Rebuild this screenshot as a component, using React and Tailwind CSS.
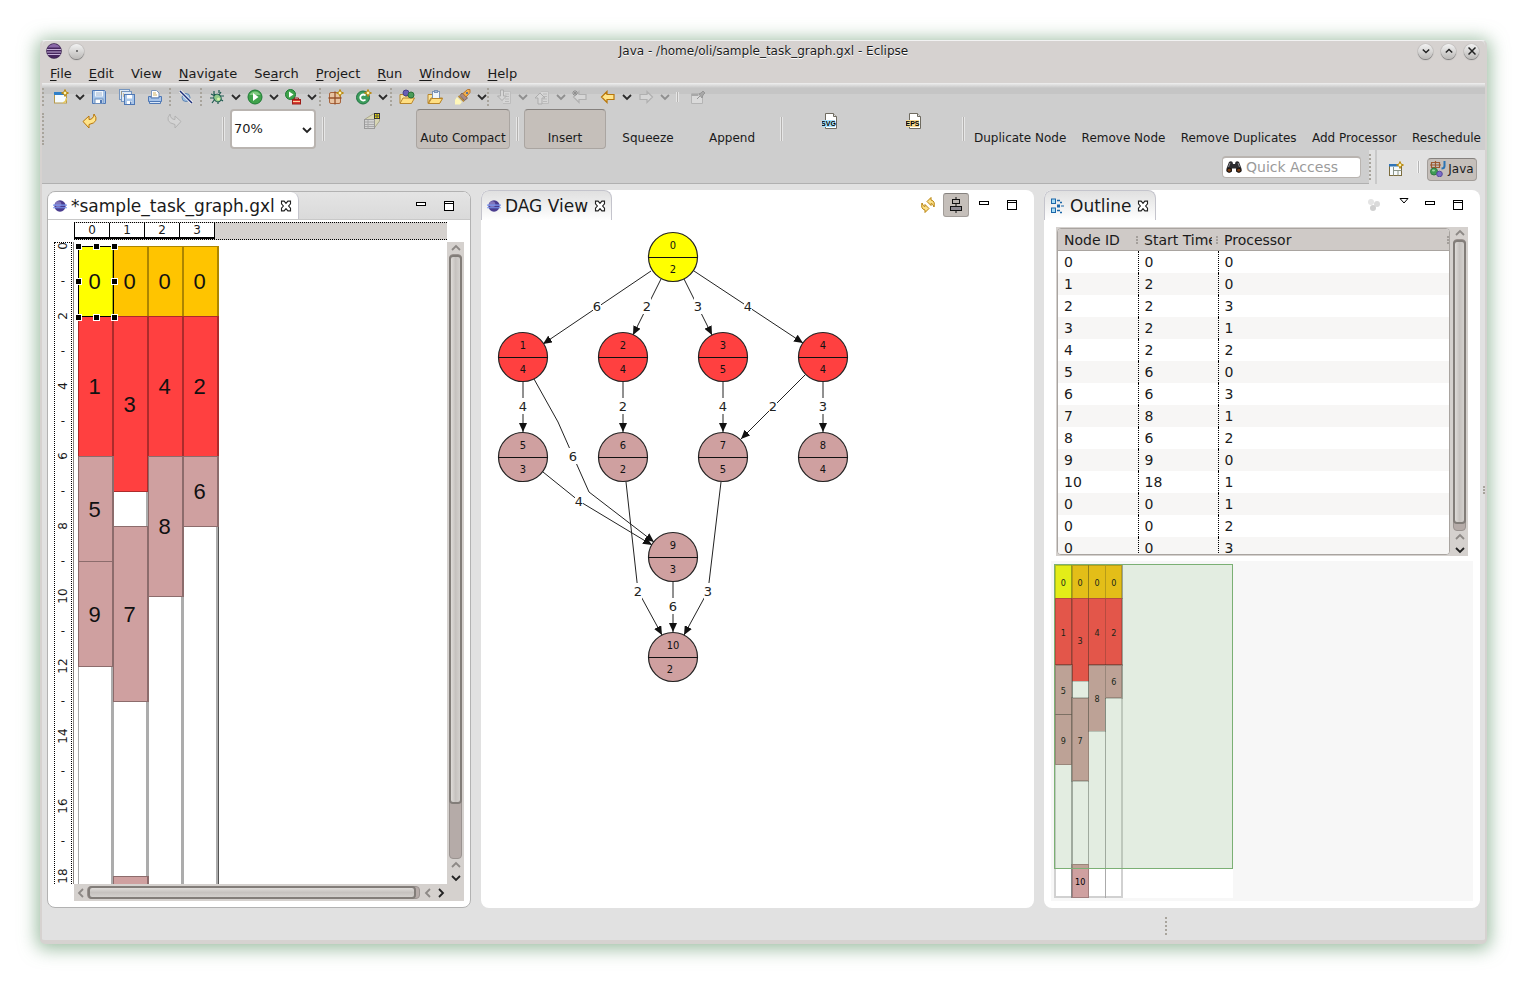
import React, { useState } from 'react';

const MENUS = [
  ['', 'F', 'ile'],
  ['', 'E', 'dit'],
  ['View', '', ''],
  ['', 'N', 'avigate'],
  ['Se', 'a', 'rch'],
  ['', 'P', 'roject'],
  ['', 'R', 'un'],
  ['', 'W', 'indow'],
  ['', 'H', 'elp'],
];

const YELLOW = '#ffff00';
const ORANGE = '#ffc400';
const RED = '#ff4040';
const PINK = '#cfa0a0';

// lane = processor, start / end in time units
const TASKS = [
  { id: 0, lane: 0, start: 0, end: 2, color: YELLOW },
  { id: 0, lane: 1, start: 0, end: 2, color: ORANGE },
  { id: 0, lane: 2, start: 0, end: 2, color: ORANGE },
  { id: 0, lane: 3, start: 0, end: 2, color: ORANGE },
  { id: 1, lane: 0, start: 2, end: 6, color: RED },
  { id: 3, lane: 1, start: 2, end: 7, color: RED },
  { id: 4, lane: 2, start: 2, end: 6, color: RED },
  { id: 2, lane: 3, start: 2, end: 6, color: RED },
  { id: 5, lane: 0, start: 6, end: 9, color: PINK },
  { id: 9, lane: 0, start: 9, end: 12, color: PINK },
  { id: 7, lane: 1, start: 8, end: 13, color: PINK },
  { id: 8, lane: 2, start: 6, end: 10, color: PINK },
  { id: 6, lane: 3, start: 6, end: 8, color: PINK },
  { id: 10, lane: 1, start: 18, end: 20, color: PINK },
];

const ROWS = [
  [0, 0, 0], [1, 2, 0], [2, 2, 3], [3, 2, 1], [4, 2, 2], [5, 6, 0], [6, 6, 3],
  [7, 8, 1], [8, 6, 2], [9, 9, 0], [10, 18, 1], [0, 0, 1], [0, 0, 2], [0, 0, 3],
];

const NODES = [
  { id: 0, cost: 2, x: 192, y: 37, color: YELLOW },
  { id: 1, cost: 4, x: 42, y: 137, color: RED },
  { id: 2, cost: 4, x: 142, y: 137, color: RED },
  { id: 3, cost: 5, x: 242, y: 137, color: RED },
  { id: 4, cost: 4, x: 342, y: 137, color: RED },
  { id: 5, cost: 3, x: 42, y: 237, color: PINK },
  { id: 6, cost: 2, x: 142, y: 237, color: PINK },
  { id: 7, cost: 5, x: 242, y: 237, color: PINK },
  { id: 8, cost: 4, x: 342, y: 237, color: PINK },
  { id: 9, cost: 3, x: 192, y: 337, color: PINK },
  { id: 10, cost: 2, x: 192, y: 437, color: PINK },
];

const EDGES = [
  { points: '170,51 62,124', label: 6, x: 116, y: 86 },
  { points: '180,59 152,115', label: 2, x: 166, y: 86 },
  { points: '203,59 231,115', label: 3, x: 217, y: 86 },
  { points: '213,51 322,123', label: 4, x: 267, y: 86 },
  { points: '42,162 42,212', label: 4, x: 42, y: 186 },
  { points: '142,162 142,212', label: 2, x: 142, y: 186 },
  { points: '242,162 242,212', label: 4, x: 242, y: 186 },
  { points: '342,162 342,212', label: 3, x: 342, y: 186 },
  { points: '324,155 260,219', label: 2, x: 292, y: 186 },
  { points: '53,159 77,202 92,236 108,272 173,322', label: 6, x: 92, y: 236 },
  { points: '62,252 98,281 171,325', label: 4, x: 98, y: 281 },
  { points: '145,262 157,371 181,415', label: 2, x: 157, y: 371 },
  { points: '240,262 227,371 203,415', label: 3, x: 227, y: 371 },
  { points: '192,362 192,412', label: 6, x: 192, y: 386 },
];

/* ---------- icons ---------- */

const Svg = ({ size = 16, children, className = '' }) => (
  <svg width={size} height={size} viewBox="0 0 16 16" fill="none" className={`shrink-0 ${className}`} aria-hidden="true">
    {children}
  </svg>
);

const Sparkle = ({ x = 12, y = 4 }) => (
  <path
    d={`M${x} ${y - 3.5}l1 2.5 2.5 1-2.5 1-1 2.5-1-2.5-2.5-1 2.5-1z`}
    fill="#fff6b0"
    stroke="#b8860b"
    strokeWidth="1"
  />
);

const NewIcon = () => (
  <Svg>
    <rect x="1.5" y="3.5" width="12" height="10.5" fill="#f4fbff" stroke="#b89a4a" />
    <rect x="1" y="3" width="10" height="3" fill="#2f7fc8" />
    <path d="M10 14q3-1 3.500-5" stroke="#e6c860" strokeWidth="1.500" />
    <Sparkle />
  </Svg>
);

const SaveIcon = () => (
  <Svg>
    <path d="M1.500 1.500h12l1 1v12h-13z" fill="#a9c6e8" stroke="#4f78b5" />
    <rect x="4" y="2" width="8" height="5.500" fill="#f2f6fb" />
    <path d="M5 4h6M5 6h6" stroke="#9fb6d2" />
    <rect x="4" y="10" width="8" height="4.500" fill="#fff" stroke="#6d8fbe" />
    <rect x="9" y="11" width="2" height="3" fill="#4f78b5" />
  </Svg>
);

const SaveAllIcon = () => (
  <Svg>
    <rect x="0.500" y="0.500" width="10" height="10" fill="#dfe9f5" stroke="#7595bf" />
    <rect x="2.500" y="2.500" width="10" height="10" fill="#dfe9f5" stroke="#7595bf" />
    <rect x="5.500" y="5.500" width="10" height="10" fill="#a9c6e8" stroke="#4f78b5" />
    <rect x="8" y="6" width="5" height="3.500" fill="#fff" />
    <rect x="8" y="12" width="5" height="3" fill="#fff" />
    <rect x="11" y="12.500" width="1.500" height="2.500" fill="#4f78b5" />
    <path d="M2 3h1M2 5h1M4 5h1M4 7h1" stroke="#c09a50" />
  </Svg>
);

const PrintIcon = () => (
  <Svg>
    <path d="M4.500 8V1.500h5l2.500 2.500v4" fill="#fff" stroke="#7b96bd" />
    <path d="M6 4h3M6 6h4" stroke="#d0b060" />
    <path d="M1.500 7.500h2.500v1.500h8V7.500h2.500v5h-13z" fill="#a7c4ea" stroke="#4f78b5" />
    <path d="M2.500 12.500h11v2h-11z" fill="#dbe8f8" stroke="#4f78b5" />
  </Svg>
);

const SkipIcon = () => (
  <Svg>
    <circle cx="8" cy="8.500" r="4" fill="#9fc0e2" stroke="#5f86b4" />
    <path d="M2 2l12 12" stroke="#fff" strokeWidth="3" />
    <path d="M2 2l12 12" stroke="#1c2f7a" strokeWidth="1.500" />
  </Svg>
);

const DebugIcon = () => (
  <Svg>
    <path d="M5 2v3l2 2M10 1v3M2 5l4 2M1 9h5M3 14l3-4M9 15v-3M12 3l-2 3M15 7h-4M14 12l-3-2" stroke="#1d5a50" strokeWidth="1.200" />
    <ellipse cx="8.500" cy="9" rx="3.500" ry="4" transform="rotate(-40 8.500 9)" fill="#8fc98a" stroke="#1d5a50" />
    <circle cx="9.500" cy="10" r="1.500" fill="#d9f3a8" />
  </Svg>
);

const RunIcon = () => (
  <Svg>
    <circle cx="8" cy="8" r="7" fill="#3fa24b" stroke="#1d7a34" />
    <path d="M2.500 6a6 6 0 0 1 11 0z" fill="#7fca80" />
    <path d="M6 4l5.500 4L6 12z" fill="#fff" />
  </Svg>
);

const ExternalIcon = () => (
  <Svg>
    <circle cx="5.500" cy="5.500" r="5" fill="#3fa24b" stroke="#1d7a34" />
    <path d="M4 2.500l4.500 3L4 8.500z" fill="#fff" />
    <path d="M9.500 10.500v-1.500h4v1.500" stroke="#a02020" />
    <rect x="7.500" y="10.500" width="8" height="4.500" fill="#d83a30" stroke="#9c1c18" />
    <path d="M8 12.500h7" stroke="#ffd0a0" />
  </Svg>
);

const PackageIcon = () => (
  <Svg>
    <rect x="1.500" y="3.500" width="11" height="11" rx="1.500" fill="#e8c4a2" stroke="#a8643c" />
    <path d="M7 2.500v13M0.500 9h13" stroke="#96502a" strokeWidth="1.300" />
    <Sparkle />
  </Svg>
);

const ClassIcon = () => (
  <Svg>
    <circle cx="7" cy="8.500" r="6.500" fill="#3c9c5c" stroke="#1f7440" />
    <path d="M9.500 6.500a3 3 0 1 0 0 4" stroke="#fff" strokeWidth="1.800" />
    <Sparkle />
  </Svg>
);

const Folder = () => (
  <>
    <path d="M1 14V5.500h4l1 1.500h6V9" fill="#fbe6a0" stroke="#b8862c" />
    <path d="M1 14.500l3-5.500h11.500l-3 5.500z" fill="#ffdf82" stroke="#b8862c" />
  </>
);

const OpenTypeIcon = () => (
  <Svg>
    <Folder />
    <circle cx="7" cy="4" r="3" fill="#6a5fb4" stroke="#47408a" />
    <circle cx="12" cy="6" r="3" fill="#4a9c58" stroke="#2a7038" />
  </Svg>
);

const OpenTaskIcon = () => (
  <Svg>
    <Folder />
    <rect x="5.500" y="2.500" width="7" height="7" fill="#eef5fc" stroke="#7b93b5" />
    <rect x="7.500" y="1.500" width="3" height="2" fill="#a5b9d4" stroke="#7b93b5" />
    <path d="M1.500 14.500l3-5h11l-3 5z" fill="#ffdf82" stroke="#b8862c" />
  </Svg>
);

const TorchIcon = () => (
  <Svg>
    <path d="M2 8l5 5-2 2.500H0V11z" fill="#fff7b8" />
    <path d="M3.500 7l5.500 5.500" stroke="#b8862c" strokeWidth="1.500" />
    <path d="M5 6.500l2-2.500 5.500 5-3 2.500z" fill="#a98c86" stroke="#7c6460" />
    <path d="M8 4.500l4.500-4h2.500v3L11 8z" fill="#f6b04c" stroke="#b8762c" />
    <circle cx="12" cy="4" r="1" fill="#2f5fa8" />
  </Svg>
);

const AnnotationIcon = ({ up }) => (
  <Svg>
    <path d="M7 2.500h7.500v12H7" fill="#d6d6d6" stroke="#bdbdbd" />
    <path d="M9 5h4M9 7.500h4M9 10h4M9 12.500h4" stroke="#bababa" />
    {up ? (
      <path d="M6 4l5 5H8v6H4V9H1z" fill="#d6d6d6" stroke="#adadad" />
    ) : (
      <path d="M6 11.500l-4.500-4.500H4.500V1h3v6h3z" fill="#d6d6d6" stroke="#adadad" />
    )}
  </Svg>
);

const ArrowIcon = ({ flip, disabled, star }) => (
  <Svg className={flip ? '-scale-x-100' : ''}>
    <path
      d="M1.500 8l5.500-5.500v3h7v5h-7v3z"
      fill={disabled ? '#d6d6d6' : '#ffe48a'}
      stroke={disabled ? '#b0b0b0' : '#b8760a'}
      strokeWidth="1.200"
    />
    {star && <path d="M3 1v6M0 4h6M1 2l4 4M5 2L1 6" stroke="#8f8f8f" />}
  </Svg>
);

const PinIcon = () => (
  <Svg>
    <path d="M1.500 4.500h11v10h-11z" fill="#dadada" stroke="#b4b4b4" />
    <path d="M1.500 6h7" stroke="#a8a8a8" strokeWidth="2" />
    <path d="M7 10l3-3M9 5l3 4 1-3 2-2-2-2-2 2z" fill="#a8a8a8" stroke="#979797" />
  </Svg>
);

const UndoIcon = ({ flip, disabled }) => (
  <Svg className={flip ? '-scale-x-100' : ''}>
    <path
      d="M1 8.500L7 3v3.500q4.500 0 5-5.500 6 8-5 10.500V15z"
      fill={disabled ? '#d4d4d4' : '#ffe48a'}
      stroke={disabled ? '#b2b2b2' : '#b8760a'}
    />
  </Svg>
);

const PropsIcon = () => (
  <Svg>
    <path d="M0.500 6.500L9 1h6.500v7L10 15.500V6.500z" fill="#d8d6b4" stroke="#aaa88c" />
    <rect x="0.500" y="6.500" width="10" height="9" fill="#d4d4d4" stroke="#9a9a9a" />
    <path d="M1 9h9M1 11.500h9M1 13.500h9M4 7v8.500" stroke="#a8a8a8" />
    <rect x="10.500" y="0.500" width="5" height="5" fill="#f0e000" stroke="#333" />
    <path d="M13 1v4.500M11 3h4.500" stroke="#555" />
  </Svg>
);

const FileTypeIcon = ({ label, color }) => (
  <Svg>
    <path d="M3.500 0.500h8l3 3v12h-11z" fill="#fff" stroke="#6f6b60" />
    <path d="M11.500 0.500v3h3" fill="#ddd" stroke="#6f6b60" />
    <rect x="0" y="7" width="13" height="7" fill={color} />
    <text x="6.500" y="13" fontSize="7" fontWeight="bold" textAnchor="middle" fill="#000" fontFamily="Liberation Sans">
      {label}
    </text>
  </Svg>
);

const BinocularsIcon = () => (
  <Svg>
    <path d="M3 3q2-1.500 3.500 0l.5 2h2l.5-2Q11 1.500 13 3l2.500 6.500v3q-2.500 2-5.500 0V9.500H6v3q-3 2-5.500 0v-3z" fill="#2c2c30" />
    <ellipse cx="3.200" cy="11.200" rx="2.200" ry="2" fill="#7a3c14" stroke="#111" />
    <ellipse cx="12.800" cy="11.200" rx="2.200" ry="2" fill="#7a3c14" stroke="#111" />
    <path d="M4 4L2.500 8M12 4l1.500 4" stroke="#8a8a90" />
  </Svg>
);

const PerspectiveIcon = () => (
  <Svg>
    <rect x="1.500" y="3.500" width="12" height="11" fill="#f6fafc" stroke="#7c6c3c" />
    <rect x="1" y="3" width="9" height="2.500" fill="#2f74b8" />
    <path d="M5.500 6v8.500M5.500 9.500h8M10 9.500v5" stroke="#8a9488" />
    <Sparkle />
  </Svg>
);

const JavaIcon = () => (
  <Svg>
    <path d="M1.500 1.500h8v5h-8zM5.500 0v8M0 4h11" stroke="#9c5a30" strokeWidth="1.200" />
    <path d="M14.500 0v5q0 2.500-3 2.500" stroke="#2a74b4" strokeWidth="2" />
    <circle cx="4" cy="10.500" r="3.500" fill="#3f9c54" stroke="#2c7a40" />
    <circle cx="9.500" cy="13" r="2.800" fill="#7a6cc8" stroke="#574a9c" />
    <ellipse cx="3.500" cy="9.500" rx="1.500" ry="1" fill="#9cd8a4" />
  </Svg>
);

const EclipseIcon = () => (
  <Svg>
    <circle cx="8" cy="8" r="7.500" fill="#46265e" stroke="#2a1440" strokeWidth="0.500" />
    <path d="M2 4.500a7 7 0 0 1 12 0z" fill="#8a68a8" />
    <path d="M1 6.500h14M1 9h14M1.500 11.500h13" stroke="#d5c0e6" strokeWidth="0.900" />
  </Svg>
);

const ViewIcon = () => (
  <Svg size={14}>
    <circle cx="8" cy="8" r="6.500" fill="#4a3c8e" />
    <circle cx="6" cy="6" r="3.500" fill="#8176bc" />
    <path d="M0 7h16M0 10h16" stroke="#7a96f0" strokeWidth="1.300" />
  </Svg>
);

const OutlineIcon = () => (
  <Svg>
    <rect x="1.500" y="1" width="4" height="4.500" fill="#a8dcf5" stroke="#1a66a8" />
    <rect x="1.500" y="10" width="4" height="4.500" fill="#a8dcf5" stroke="#1a66a8" />
    <path d="M7 2.500h3M10 4.500h2M7 12.500h3M10 14.500h2" stroke="#1a66a8" strokeWidth="1.300" />
    <rect x="7.500" y="7" width="2" height="2" stroke="#1a66a8" />
    <path d="M11 8h3" stroke="#1a66a8" />
  </Svg>
);

const SyncIcon = () => (
  <Svg>
    <path d="M6 5.500L10 1.500V4q4.500 1 3 7-1-3.500-3-3.500V9.500z" transform="translate(1 -1)" fill="#fbe08a" stroke="#b8820a" />
    <path d="M10 10.500L6 14.500V12q-4.500-1-3-7 1 3.500 3 3.500V6.500z" transform="translate(-1 1)" fill="#fbe08a" stroke="#b8820a" />
  </Svg>
);

const LayoutIcon = () => (
  <Svg>
    <path d="M8 0v16" stroke="#111" />
    <rect x="4.500" y="2.500" width="7" height="4" fill="#b9b4b0" stroke="#111" />
    <rect x="2.500" y="9.500" width="11" height="4" fill="#8d8a92" stroke="#111" />
  </Svg>
);

const DotsIcon = () => (
  <Svg>
    <circle cx="5" cy="5" r="3" fill="#e4e4e4" />
    <circle cx="11" cy="7" r="3" fill="#dadada" />
    <circle cx="7" cy="11" r="3" fill="#d0d0d0" />
  </Svg>
);

const CloseIcon = () => (
  <Svg size={12}>
    <path
      d="M2 1.500h3.500L8 4.500l2.500-3H14v3.500L11.500 8l2.500 3v3.500h-3.500L8 11.500l-2.500 3H2V11l2.500-3L2 5z"
      fill="#fff"
      stroke="#222"
      strokeWidth="1.500"
    />
  </Svg>
);

const Chevron = ({ dir = 'down', color = '#222', size = 10 }) => {
  const d = {
    down: 'M1 3l4 4 4-4',
    up: 'M1 7l4-4 4 4',
    left: 'M7 1L3 5l4 4',
    right: 'M3 1l4 4-4 4',
  };
  return (
    <svg width={size} height={size} viewBox="0 0 10 10" fill="none" className="shrink-0" aria-hidden="true">
      <path d={d[dir]} stroke={color} strokeWidth="1.800" />
    </svg>
  );
};

/* ---------- toolbar parts ---------- */

const Handle = () => <div className="h-[18px] w-[3px] shrink-0 border-l-2 border-dotted border-[#a8a49c]" />;

const Sep = ({ className = 'h-10' }) => (
  <div className={`flex w-[14px] shrink-0 items-center justify-center ${className}`}>
    <div className="h-3/5 w-[3px] border-x border-[#e6e6e6] bg-[#b4b2b0]" />
  </div>
);

const Tool = ({ label, children }) => (
  <button type="button" aria-label={label} className="flex h-[18px] w-7 shrink-0 items-center justify-center">
    {children}
  </button>
);

const Drop = ({ label, disabled }) => (
  <button type="button" aria-label={label} className="flex h-[18px] w-[10px] shrink-0 items-center justify-center">
    <Chevron color={disabled ? '#8f8f8f' : '#2a2a2a'} />
  </button>
);

const BigTool = ({ label, icon }) => (
  <button type="button" aria-label={label} className="flex h-10 w-[84px] shrink-0 justify-center pt-1">
    {icon}
  </button>
);

const TextTool = ({ label, active, className = 'w-[84px]' }) => (
  <button
    type="button"
    aria-pressed={active}
    className={`flex h-10 items-end justify-center rounded-[4px] border pb-px whitespace-nowrap ${className} ${
      active ? 'border-[#aaa5a1] border-t-[#85817e] bg-[#c5bfba]' : 'border-transparent'
    }`}
  >
    {label}
  </button>
);

const RoundButton = ({ label, children }) => (
  <button
    type="button"
    aria-label={label}
    className="flex size-[15px] items-center justify-center rounded-full bg-linear-to-b from-[#f2f2f2] to-[#bcbab8] shadow-[0_1px_1px_#777,0_0_1px_#777]"
  >
    {children}
  </button>
);

/* ---------- panels ---------- */

const MinButton = () => (
  <button type="button" aria-label="Minimize" className="flex size-7 items-center justify-center pb-1">
    <span className="h-1 w-[10px] border border-black bg-white" />
  </button>
);

const MaxButton = () => (
  <button type="button" aria-label="Maximize" className="flex size-7 items-center justify-center">
    <span className="h-[10px] w-[10px] border border-black bg-white">
      <span className="mt-px block h-px bg-black" />
    </span>
  </button>
);

const Tab = ({ icon, title, active }) => (
  <div
    className={`flex h-full shrink-0 items-center rounded-t-lg border-[#c4c4cc] pl-[5px] ${
      active ? 'border-r bg-white' : 'border-x border-t bg-linear-to-b from-[#e0e0e0] to-white'
    }`}
  >
    {icon}
    <span className="pl-1 text-[17px] leading-7 whitespace-nowrap">{title}</span>
    <button type="button" aria-label={`Close ${title}`} className="flex w-[23px] justify-center">
      <CloseIcon />
    </button>
  </div>
);

const VScroll = ({ thumb, className = '' }) => (
  <div className={`flex w-[17px] shrink-0 flex-col items-center bg-[#d5d1ce] ${className}`}>
    <div className="flex h-3 items-center"><Chevron dir="up" color="#8d8986" /></div>
    <div className="w-[13px] flex-1 rounded-[4px] border border-[#9a9390] bg-[#b5aba8]">
      <div
        className="-mx-px rounded-[4px] border-2 border-[#827d79] bg-linear-to-r from-[#dedbd8] via-[#c6c2bf] to-[#d3d0cd]"
        style={{ height: thumb }}
      />
    </div>
    <div className="flex h-3 items-center"><Chevron dir="up" color="#8d8986" /></div>
    <div className="flex h-[13px] items-center"><Chevron /></div>
  </div>
);

const HScroll = () => (
  <div className="flex h-[17px] items-center bg-[#d5d1ce]">
    <div className="flex w-[13px] justify-center"><Chevron dir="left" color="#8d8986" /></div>
    <div className="h-[13px] flex-1 rounded-[4px] border border-[#9a9390] bg-[#b5aba8]">
      <div className="-my-px h-[13px] w-[99%] rounded-[4px] border-2 border-[#827d79] bg-linear-to-b from-[#dedbd8] via-[#c6c2bf] to-[#d3d0cd]" />
    </div>
    <div className="flex w-4 justify-center"><Chevron dir="left" color="#8d8986" /></div>
    <div className="flex w-7"><Chevron dir="right" /></div>
  </div>
);

const GanttChart = () => {
  const unit = 35;
  const x0 = 4;
  const y0 = 4;
  return (
    <svg className="absolute inset-0 h-full w-full" shapeRendering="crispEdges" fontFamily="Liberation Sans" fontSize="22">
      <rect x={x0} y={y0} width="1" height="1000" fill="#aaa" />
      {[1, 2, 3, 4].map((i) => (
        <rect key={i} x={x0 + i * unit - 2} y={y0} width="3" height="1000" fill="#acacac" />
      ))}
      <rect x={x0 + 4 * unit} y={y0} width="1" height="1000" fill="#555" />
      {TASKS.map((t, i) => {
        const x = x0 + t.lane * unit;
        const y = y0 + t.start * unit;
        const h = (t.end - t.start) * unit;
        return (
          <g key={i}>
            <rect x={x} y={y} width={unit + 1} height={h + 1} fill={t.color} />
            <path
              d={`M${x} ${y}h${unit + 1}v${h + 1}h-${unit + 1}zM${x + 1} ${y + 1}v${h - 1}h${unit - 2}v-${h - 1}z`}
              fill="#000"
              fillOpacity="0.320"
              fillRule="evenodd"
            />
            {/* the last task starts below the fold */}
            {t.start < 18 && (
              <text x={x + unit / 2 - 1} y={y + h / 2 + 8} textAnchor="middle" fill="#111">
                {t.id}
              </text>
            )}
          </g>
        );
      })}
      <rect x="4.500" y="4.500" width="35" height="70" fill="none" stroke="#000" />
      {[4, 22, 40].map((x) =>
        [4, 39, 75].map((y) =>
          x === 22 && y === 39 ? null : (
            <rect key={`${x}-${y}`} x={x - 2.5} y={y - 2.5} width="6" height="6" fill="#000" stroke="#fff" />
          )
        )
      )}
    </svg>
  );
};

const Overview = () => {
  const unit = 16.63;
  const lane = 16.8;
  return (
    <svg width="182" height="340" shapeRendering="crispEdges" fontFamily="DejaVu Sans Condensed, DejaVu Sans" fontSize="9">
      <rect x="3" y="3" width="179" height="334" fill="#fff" />
      {[0, 1, 2, 3].map((i) => (
        <rect key={i} x={4 + i * lane} y="4" width={lane} height="332" fill="none" stroke="#000" strokeOpacity="0.180" strokeWidth="1.500" />
      ))}
      {TASKS.map((t, i) => {
        const x = 4 + t.lane * lane;
        const y = 4 + t.start * unit;
        const h = (t.end - t.start) * unit;
        return (
          <g key={i}>
            <rect x={x} y={y} width={lane} height={h} fill={t.color} />
            <rect x={x} y={y} width={lane} height={h} fill="none" stroke="#000" strokeOpacity="0.220" strokeWidth="1.500" />
            <text x={x + lane / 2} y={y + h / 2 + 4} textAnchor="middle" fill="#000">
              {t.id}
            </text>
          </g>
        );
      })}
      <rect x="3.500" y="3.500" width="178" height="304" fill="#7daa73" fillOpacity="0.210" stroke="#7bb074" />
    </svg>
  );
};

const DagChart = () => (
  <svg className="h-full w-full" fontFamily="DejaVu Sans">
    <defs>
      <marker id="arrow" viewBox="0 0 9 8" refX="9" refY="4" markerWidth="9" markerHeight="8" orient="auto" markerUnits="userSpaceOnUse">
        <path d="M0 0l9 4-9 4z" fill="#111" />
      </marker>
    </defs>
    {EDGES.map((e, i) => (
      <polyline key={i} points={e.points} fill="none" stroke="#222" markerEnd="url(#arrow)" />
    ))}
    {EDGES.map((e, i) => (
      <g key={i}>
        <rect x={e.x - 4} y={e.y - 8} width="8" height="16" fill="#fff" />
        <text x={e.x} y={e.y + 5} fontSize="13" textAnchor="middle" fill="#222">
          {e.label}
        </text>
      </g>
    ))}
    {NODES.map((n) => (
      <g key={n.id} fontSize="11" textAnchor="middle" fontFamily="DejaVu Sans Condensed, DejaVu Sans">
        <circle cx={n.x} cy={n.y} r="24.500" fill={n.color} stroke="#222" strokeWidth="1.200" />
        <path d={`M${n.x - 24.5} ${n.y + 0.5}h49`} stroke="#111" />
        <text x={n.x} y={n.y - 8} fill="#111">{n.id}</text>
        <text x={n.id > 9 ? n.x - 3 : n.x} y={n.y + 16} fill="#111">{n.cost}</text>
      </g>
    ))}
  </svg>
);

const EditorPanel = () => (
  <section className="flex min-w-0 flex-[422_1_0%] flex-col overflow-hidden rounded-lg border border-[#b2b2b2] bg-white">
    <header className="flex h-7 shrink-0 items-center border-b border-[#c8c8c8] bg-linear-to-b from-[#e4e4e4] to-[#dadada]">
      <Tab active icon={<ViewIcon />} title="*sample_task_graph.gxl" />
      <div className="flex-1" />
      <MinButton />
      <MaxButton />
      <div className="w-[7px]" />
    </header>
    <div className="flex min-h-0 flex-1 flex-col px-1.5 pt-[2px] pb-1.5">
      <div className="mr-[17px] ml-5 flex h-[18px] shrink-0 border-y border-dotted border-black bg-[#d5d1ce] text-[12px] leading-[14px]">
        {[0, 1, 2, 3].map((n) => (
          <div key={n} className="w-[35px] border-r border-b-2 border-black bg-white text-center first:w-9 first:border-l">
            {n}
          </div>
        ))}
      </div>
      <div className="mt-[2px] flex min-h-0 flex-1">
        <div className="w-[18px] shrink-0 overflow-hidden border-x border-t border-dotted border-black text-[12px]">
          <div className="-mt-[15px] flex flex-col">
            {Array.from({ length: 19 }, (_, t) => (
              <div key={t} className="flex h-[35px] shrink-0 items-center justify-center">
                {t % 2 ? <span>-</span> : <span className="-rotate-90">{t}</span>}
              </div>
            ))}
          </div>
        </div>
        <div className="w-[2px] shrink-0 border-r border-[#8c8682]" />
        <div className="relative min-w-0 flex-1 overflow-hidden">
          <GanttChart />
        </div>
        <VScroll thumb="91%" />
      </div>
      <div className="ml-5 shrink-0">
        <HScroll />
      </div>
    </div>
  </section>
);

const DagPanel = () => (
  <section className="-mt-px flex min-w-0 flex-[553_1_0%] flex-col overflow-hidden rounded-lg bg-white">
    <header className="flex h-[30px] shrink-0 items-center">
      <Tab icon={<ViewIcon />} title="DAG View" />
      <div className="flex-1" />
      <button type="button" aria-label="Refresh" className="flex size-7 items-center justify-center">
        <SyncIcon />
      </button>
      <button
        type="button"
        aria-label="Toggle layout"
        className="mx-px flex h-6 w-[26px] items-center justify-center rounded-[3px] border border-[#a29d99] border-t-[#85817e] bg-[#c5bfba]"
      >
        <LayoutIcon />
      </button>
      <MinButton />
      <MaxButton />
      <div className="w-2" />
    </header>
    <div className="min-h-0 flex-1">
      <DagChart />
    </div>
  </section>
);

const OutlinePanel = () => (
  <section className="-mt-px flex min-w-0 flex-[436_1_0%] flex-col overflow-hidden rounded-lg bg-white">
    <header className="flex h-[30px] shrink-0 items-center">
      <Tab icon={<OutlineIcon />} title="Outline" />
      <div className="flex-1" />
      <button type="button" aria-label="Focus" className="mr-1 flex size-7 items-center justify-center">
        <DotsIcon />
      </button>
      <button type="button" aria-label="View menu" className="flex h-7 w-6 items-center justify-center pb-2">
        <svg width="10" height="6" viewBox="0 0 10 6" aria-hidden="true">
          <path d="M1 .5h8L5 5z" fill="#fff" stroke="#000" />
        </svg>
      </button>
      <MinButton />
      <MaxButton />
      <div className="w-2" />
    </header>
    <div className="mx-3 mt-[7px] flex min-h-0 flex-1 bg-[#d5d1ce] pl-px">
      <div className="my-px min-w-0 flex-1 overflow-hidden rounded-[4px] border border-[#a9a4a0] bg-white">
        <table className="w-full table-fixed border-collapse text-left text-[14px]">
          <thead>
            <tr className="h-[21px] border-b border-[#a9a4a0] bg-[#cfcac7]">
              {['Node ID', 'Start Time', 'Processor'].map((h, i) => (
                <th key={h} scope="col" className={`pt-px pr-1 pb-0 pl-1.5 leading-5 font-normal ${i < 2 ? 'w-20' : ''}`}>
                  <div className="flex items-center">
                    <span className="min-w-0 flex-1 overflow-hidden whitespace-nowrap">{h}</span>
                    <span className="-mr-1 ml-1 h-2 border-l-2 border-dotted border-[#a39e9a]" />
                  </div>
                </th>
              ))}
            </tr>
          </thead>
          <tbody>
            {ROWS.map((row, i) => (
              <tr key={i} className="h-[22px] even:bg-[#f7f6f5]">
                {row.map((v, j) => (
                  <td key={j} className={`py-0 pl-1.5 leading-5 ${j < 2 ? 'border-r border-dotted border-black' : ''}`}>
                    {v}
                  </td>
                ))}
              </tr>
            ))}
          </tbody>
        </table>
      </div>
      <VScroll thumb="98%" className="ml-px" />
    </div>
    <div className="mx-[7px] mt-[5px] mb-[7px] h-[340px] shrink-0 bg-[#f7f7f7]">
      <Overview />
    </div>
  </section>
);

export default function App() {
  const [zoom, setZoom] = useState('70%');
  const [query, setQuery] = useState('');

  return (
    <div className="flex h-screen bg-white p-10 font-['DejaVu_Sans',sans-serif] text-[#1a1a1a]">
      <div className="flex min-w-0 flex-1 flex-col rounded-[5px] border-x-2 border-t border-b-4 border-[#d6d2d0] border-t-[#f2f2f2] bg-[#e1e1e1] shadow-[0_2px_18px_3px_rgba(90,145,100,0.6)]">
        <div className="flex h-5 shrink-0 items-center rounded-t-[5px] bg-[#d6d2d0] px-1">
          <div className="flex w-16 items-center gap-[7px]">
            <EclipseIcon />
            <RoundButton label="Pin window">
              <span className="size-0.5 rounded-full bg-[#555]" />
            </RoundButton>
          </div>
          <h1 className="flex-1 text-center text-[12px] [text-shadow:0_1px_0_#fff]">Java - /home/oli/sample_task_graph.gxl - Eclipse</h1>
          <div className="flex w-16 items-center justify-end gap-2 pr-0.5">
            <RoundButton label="Minimize window"><Chevron size={8} /></RoundButton>
            <RoundButton label="Maximize window"><Chevron size={8} dir="up" /></RoundButton>
            <RoundButton label="Close window">
              <svg width="8" height="8" viewBox="0 0 8 8" aria-hidden="true">
                <path d="M.5 .5l7 7M7.500 .5l-7 7" stroke="#222" strokeWidth="1.500" />
              </svg>
            </RoundButton>
          </div>
        </div>
        <nav className="flex h-[22px] shrink-0 items-center gap-[17px] bg-[#d6d2d0] pt-[3px] pl-2 text-[13px]">
          {MENUS.map(([a, key, b]) => (
            <button type="button" key={a + key + b}>
              {a}
              {key && <span className="underline underline-offset-2">{key}</span>}
              {b}
            </button>
          ))}
        </nav>

        <div className="shrink-0 bg-[#cecece] text-[12px]">
          <div className="h-[5px] bg-linear-to-b from-[#efefef] to-[#c6c6c6]" />
          <div className="flex h-[18px] items-center bg-linear-to-b from-[#c5c5c5] from-35% to-[#cecece] to-35%">
            <Handle />
            <div className="w-0.5" />
            <Tool label="New"><NewIcon /></Tool>
            <Drop label="New menu" />
            <Tool label="Save"><SaveIcon /></Tool>
            <Tool label="Save All"><SaveAllIcon /></Tool>
            <Tool label="Print"><PrintIcon /></Tool>
            <Handle />
            <Tool label="Skip All Breakpoints"><SkipIcon /></Tool>
            <Handle />
            <Tool label="Debug"><DebugIcon /></Tool>
            <Drop label="Debug menu" />
            <Tool label="Run"><RunIcon /></Tool>
            <Drop label="Run menu" />
            <Tool label="External Tools"><ExternalIcon /></Tool>
            <Drop label="External Tools menu" />
            <div className="w-0.5" />
            <Handle />
            <Tool label="New Package"><PackageIcon /></Tool>
            <Tool label="New Class"><ClassIcon /></Tool>
            <Drop label="New Class menu" />
            <div className="w-0.5" />
            <Handle />
            <Tool label="Open Type"><OpenTypeIcon /></Tool>
            <Tool label="Open Task"><OpenTaskIcon /></Tool>
            <Tool label="Search"><TorchIcon /></Tool>
            <Drop label="Search menu" />
            <Handle />
            <Tool label="Next Annotation"><AnnotationIcon /></Tool>
            <Drop label="Next Annotation menu" disabled />
            <Tool label="Previous Annotation"><AnnotationIcon up /></Tool>
            <Drop label="Previous Annotation menu" disabled />
            <Tool label="Last Edit Location"><ArrowIcon disabled star /></Tool>
            <Tool label="Back"><ArrowIcon /></Tool>
            <Drop label="Back menu" />
            <Tool label="Forward"><ArrowIcon flip disabled /></Tool>
            <Drop label="Forward menu" disabled />
            <Sep className="h-[18px]" />
            <Tool label="Pin Editor"><PinIcon /></Tool>
          </div>

          <div className="flex h-[44px] items-start pt-[3px]">
            <div className="mt-1 mr-[3px] h-8 w-[3px] shrink-0 border-l-2 border-dotted border-[#a8a49c]" />
            <BigTool label="Undo" icon={<UndoIcon />} />
            <BigTool label="Redo" icon={<UndoIcon flip disabled />} />
            <Sep />
            <div className="relative h-10 w-[86px] shrink-0">
              <select
                aria-label="Zoom"
                value={zoom}
                onChange={(e) => setZoom(e.target.value)}
                className="h-10 w-full appearance-none rounded-[4px] border-2 border-[#b9b4b0] bg-white pl-0.5 text-[13px]"
              >
                <option>50%</option>
                <option>70%</option>
                <option>100%</option>
              </select>
              <span className="pointer-events-none absolute top-4 right-1">
                <Chevron />
              </span>
            </div>
            <Sep />
            <BigTool label="Properties" icon={<PropsIcon />} />
            <div className="w-0.5" />
            <TextTool label="Auto Compact" active className="w-[94px]" />
            <Sep />
            <TextTool label="Insert" active className="w-[82px]" />
            <TextTool label="Squeeze" />
            <TextTool label="Append" />
            <Sep />
            <BigTool label="Export SVG" icon={<FileTypeIcon label="SVG" color="#a6e0fb" />} />
            <BigTool label="Export EPS" icon={<FileTypeIcon label="EPS" color="#f9dc90" />} />
            <Sep />
            <div className="flex flex-1 justify-between px-[3px]">
              {['Duplicate Node', 'Remove Node', 'Remove Duplicates', 'Add Processor', 'Reschedule'].map((l) => (
                <TextTool key={l} label={l} className="" />
              ))}
            </div>
          </div>

          <div className="flex h-[34px]">
            <div className="flex flex-1 items-center justify-end border-b border-[#b0b0b0] pr-2">
              <label className="flex h-[22px] w-[139px] items-center gap-1 rounded-[4px] border border-t-2 border-[#b9b4b0] bg-white pl-[3px]">
                <BinocularsIcon />
                <input
                  aria-label="Quick Access"
                  placeholder="Quick Access"
                  value={query}
                  onChange={(e) => setQuery(e.target.value)}
                  className="w-full min-w-0 text-[14px] leading-4 outline-none placeholder:text-[#9a9a9a]"
                />
              </label>
            </div>
            <div className="flex w-[116px] items-center bg-[#e1e1e1]">
              <div className="h-[26px] border-l-2 border-dotted border-[#a8a49c]" />
              <div className="ml-1 h-full w-0.5 bg-[#c9c9c9]" />
              <div className="flex w-[38px] justify-center pt-1"><PerspectiveIcon /></div>
              <div className="mr-[7px] ml-0.5 h-3 w-[3px] border-x border-[#f2f2f2] bg-[#b4b4b4]" />
              <button
                type="button"
                className="mt-1 flex h-[23px] w-[50px] items-center justify-center gap-0.5 rounded-[4px] border border-[#a29d99] border-t-[#85817e] bg-[#c5bfba]"
              >
                <JavaIcon />
                Java
              </button>
            </div>
          </div>
        </div>

        <div className="flex min-h-0 flex-1">
          <main className="flex min-h-0 min-w-0 flex-1 gap-[10px] pt-[7px] pl-[5px]">
            <EditorPanel />
            <DagPanel />
            <OutlinePanel />
          </main>
          <div className="flex w-[5px] flex-col items-end justify-center pb-28">
            <div className="h-2 border-l-2 border-dotted border-[#a8a49c]" />
          </div>
        </div>
        <footer className="flex h-8 shrink-0 items-center justify-end pt-1 pr-[318px]">
          <div className="h-[18px] border-l-2 border-dotted border-[#a8a49c]" />
        </footer>
      </div>
    </div>
  );
}
